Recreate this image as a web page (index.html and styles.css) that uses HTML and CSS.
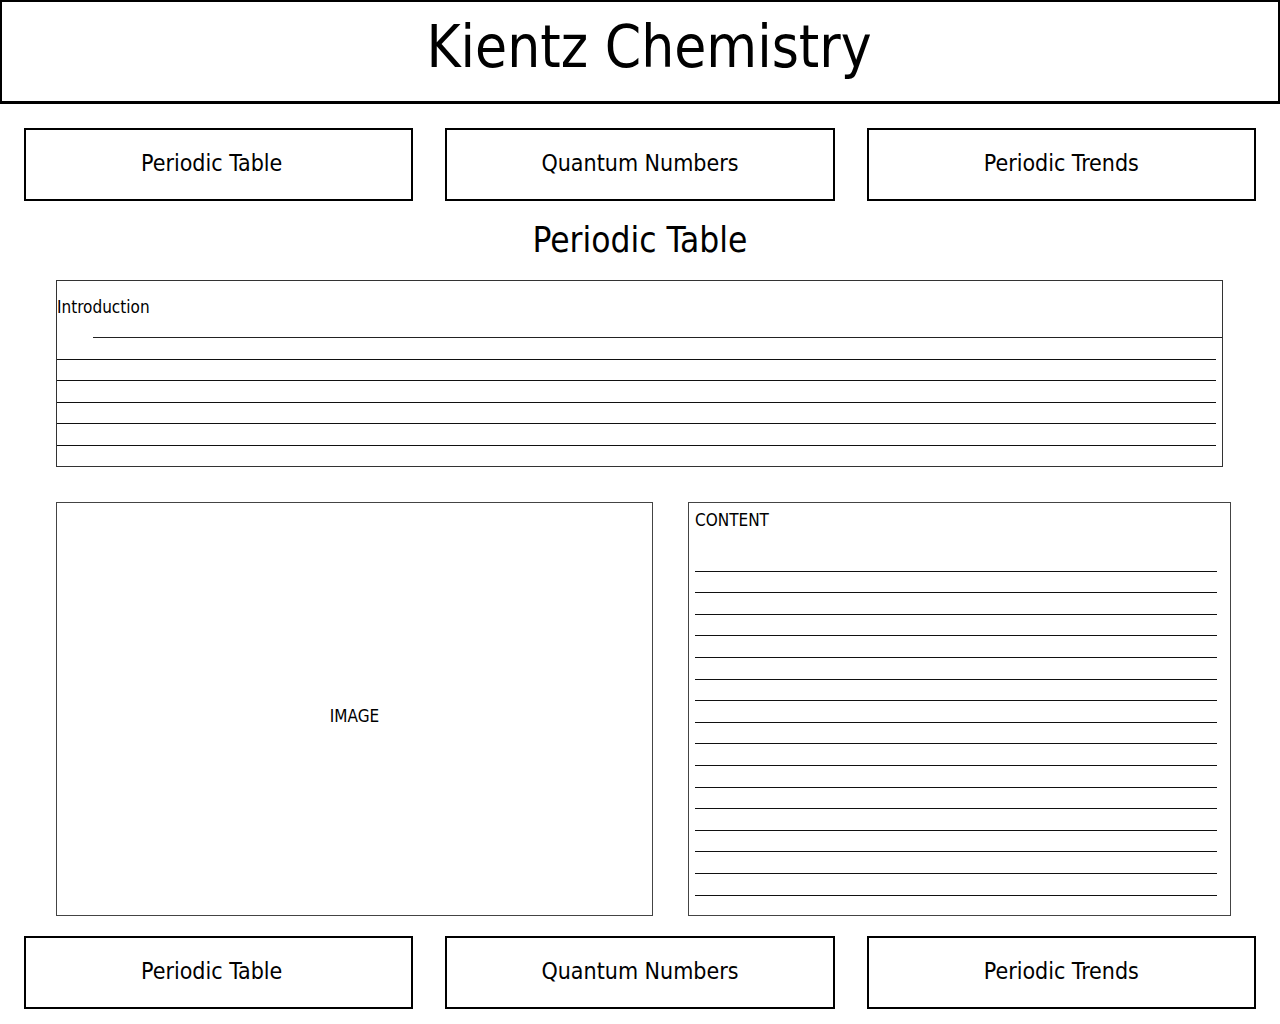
FILE: index.html
```html
<!DOCTYPE html>
<html lang="en">
<head>
    <meta charset="UTF-8">
    <meta name="viewport" content="width=device-width, initial-scale=1.0">
    <title>Kientz Chemistry</title>
    <link rel="stylesheet" href="styles.css">
</head>
<body>
    <header class="site-header">
        <h1>Kientz Chemistry</h1>
    </header>

    <nav class="nav-row">
        <a class="nav-btn" href="#">Periodic Table</a>
        <a class="nav-btn" href="#">Quantum Numbers</a>
        <a class="nav-btn" href="#">Periodic Trends</a>
    </nav>

    <h2 class="page-title">Periodic Table</h2>

    <section class="intro">
        <p class="intro-label">Introduction</p>
        <div class="intro-first"></div>
        <div class="rule"></div>
        <div class="rule"></div>
        <div class="rule"></div>
        <div class="rule"></div>
        <div class="rule"></div>
    </section>

    <div class="main-row">
        <div class="image-box">IMAGE</div>
        <div class="content-box">
            <p class="content-label">CONTENT</p>
            <div class="lines">
                <div class="line"></div>
                <div class="line"></div>
                <div class="line"></div>
                <div class="line"></div>
                <div class="line"></div>
                <div class="line"></div>
                <div class="line"></div>
                <div class="line"></div>
                <div class="line"></div>
                <div class="line"></div>
                <div class="line"></div>
                <div class="line"></div>
                <div class="line"></div>
                <div class="line"></div>
                <div class="line"></div>
                <div class="line"></div>
            </div>
        </div>
    </div>

    <nav class="nav-row bottom">
        <a class="nav-btn" href="#">Periodic Table</a>
        <a class="nav-btn" href="#">Quantum Numbers</a>
        <a class="nav-btn" href="#">Periodic Trends</a>
    </nav>
</body>
</html>
```

FILE: styles.css
```css
body {
    margin: 0;
    font-family: 'DejaVu Sans Condensed', 'DejaVu Sans', sans-serif;
    color: #000;
    background: #fff;
}

.site-header {
    height: 99px;
    padding-left: 18px;
    border: 2px solid #000;
    border-bottom-width: 3px;
    display: flex;
    align-items: center;
    justify-content: center;
}

.site-header h1 {
    margin: 0;
    font-size: 58px;
    font-weight: normal;
    line-height: 1;
    position: relative;
    top: -5px;
}

.nav-row {
    display: grid;
    grid-template-columns: repeat(3, 1fr);
    gap: 32px;
    padding: 24px 24px 0;
}

.nav-row.bottom {
    padding-top: 20px;
}

.nav-btn {
    box-sizing: border-box;
    height: 73px;
    padding-bottom: 4px;
    border: 2px solid #000;
    display: flex;
    align-items: center;
    justify-content: center;
    font-size: 23px;
    color: #000;
    text-decoration: none;
}

.nav-btn:first-child {
    padding-right: 14px;
}

.page-title {
    margin: 17px 0 18px;
    text-align: center;
    font-size: 35px;
    font-weight: normal;
    line-height: 44px;
}

.intro {
    margin: 0 57px 0 56px;
    border: 1px solid #333;
}

.intro-label {
    margin: 0;
    padding-top: 15px;
    height: 41px;
    font-size: 17px;
    line-height: 22px;
}

.intro-first {
    margin-left: 36px;
    height: 20.5px;
    border-top: 1px solid #222;
}

.rule {
    margin-right: 6px;
    height: 20.5px;
    border-top: 1px solid #111;
}

.main-row {
    display: flex;
    gap: 35px;
    margin: 35px 49px 0 56px;
}

.image-box {
    width: 595px;
    height: 398px;
    padding-top: 14px;
    border: 1px solid #444;
    display: flex;
    align-items: center;
    justify-content: center;
    font-size: 17px;
}

.content-box {
    flex: 1;
    height: 412px;
    border: 1px solid #444;
    padding: 0 13px 0 6px;
}

.content-label {
    margin: 0;
    padding-top: 6px;
    height: 41px;
    font-size: 17px;
    line-height: 22px;
}

.line {
    height: 20.6px;
    border-bottom: 1px solid #111;
}
```
